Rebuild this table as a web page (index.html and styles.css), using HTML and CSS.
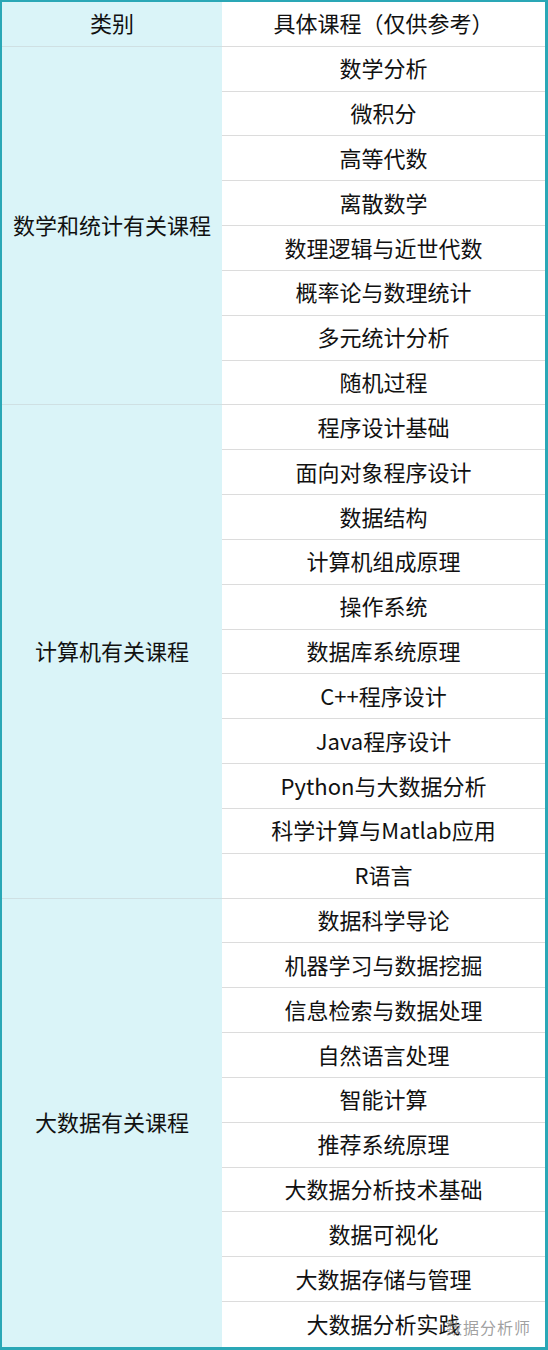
FILE: index.html
```html
<!DOCTYPE html>
<html lang="zh">
<head>
<meta charset="utf-8">
<link rel="stylesheet" href="styles.css">
</head>
<body>
<div class="table">
  <div class="cat head">类别</div>
  <div class="course head">具体课程（仅供参考）</div>

  <div class="cat g1">数学和统计有关课程</div>
  <div class="course">数学分析</div>
  <div class="course">微积分</div>
  <div class="course">高等代数</div>
  <div class="course">离散数学</div>
  <div class="course">数理逻辑与近世代数</div>
  <div class="course">概率论与数理统计</div>
  <div class="course">多元统计分析</div>
  <div class="course">随机过程</div>

  <div class="cat g2">计算机有关课程</div>
  <div class="course">程序设计基础</div>
  <div class="course">面向对象程序设计</div>
  <div class="course">数据结构</div>
  <div class="course">计算机组成原理</div>
  <div class="course">操作系统</div>
  <div class="course">数据库系统原理</div>
  <div class="course">C++程序设计</div>
  <div class="course">Java程序设计</div>
  <div class="course">Python与大数据分析</div>
  <div class="course">科学计算与Matlab应用</div>
  <div class="course">R语言</div>

  <div class="cat g3">大数据有关课程</div>
  <div class="course">数据科学导论</div>
  <div class="course">机器学习与数据挖掘</div>
  <div class="course">信息检索与数据处理</div>
  <div class="course">自然语言处理</div>
  <div class="course">智能计算</div>
  <div class="course">推荐系统原理</div>
  <div class="course">大数据分析技术基础</div>
  <div class="course">数据可视化</div>
  <div class="course">大数据存储与管理</div>
  <div class="course last">大数据分析实践</div>

  <div class="watermark">数据分析师</div>
</div>
</body>
</html>
```

FILE: styles.css
```css
* { box-sizing: border-box; }
html, body { margin: 0; padding: 0; background: #ffffff; }
.table {
  position: relative;
  width: 548px;
  height: 1350px;
  border-style: solid;
  border-color: #2aa7b6;
  border-width: 2px 3px 3px 2px;
  display: grid;
  grid-template-columns: 220px 1fr;
  grid-template-rows: repeat(30, 1fr);
  font-family: "Microsoft YaHei", "Noto Sans CJK SC", "Noto Sans", sans-serif;
  font-size: 22px;
  color: #111111;
}
.cat, .course {
  display: flex;
  align-items: center;
  justify-content: center;
  padding-bottom: 3px;
  border-bottom: 1px solid #dcdcdc;
  white-space: nowrap;
}
.cat {
  grid-column: 1;
  background: #daf4f8;
  border-bottom-color: #cfe0e3;
}
.course { grid-column: 2; background: #ffffff; }
.g1 { grid-row: 2 / span 8; }
.g2 { grid-row: 10 / span 11; }
.g3 { grid-row: 21 / span 10; border-bottom: none; }
.last { border-bottom: none; }
.watermark {
  position: absolute;
  right: 14px;
  bottom: 8px;
  font-size: 16px;
  letter-spacing: 1px;
  color: rgba(130, 130, 130, 0.75);
}
```
